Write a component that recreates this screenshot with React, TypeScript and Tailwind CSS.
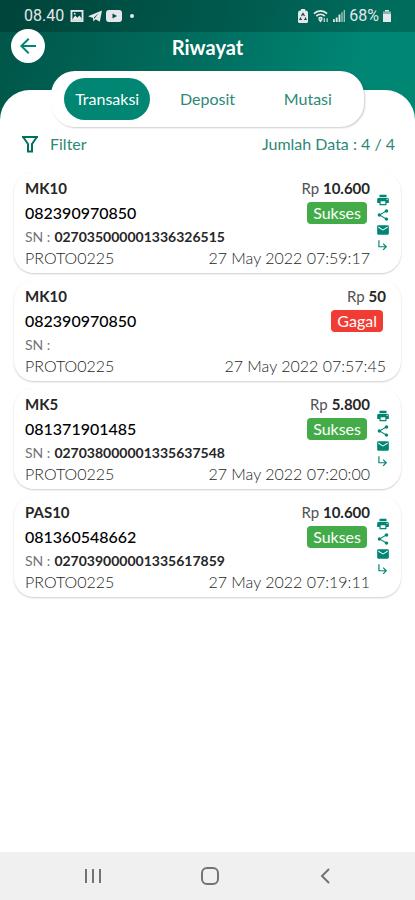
import { useState } from "react";
import { MdArrowBack, MdEmail, MdPrint, MdShare, MdSubdirectoryArrowRight } from "react-icons/md";

type Status = "Sukses" | "Gagal";

interface Transaction {
  id: number;
  product: string;
  target: string;
  sn: string;
  agent: string;
  price: string;
  status: Status;
  date: string;
}

const TABS = ["Transaksi", "Deposit", "Mutasi"];

const TRANSACTIONS: Transaction[] = [
  { id: 1, product: "MK10", target: "082390970850", sn: "027035000001336326515", agent: "PROTO0225", price: "10.600", status: "Sukses", date: "27 May 2022 07:59:17" },
  { id: 2, product: "MK10", target: "082390970850", sn: "", agent: "PROTO0225", price: "50", status: "Gagal", date: "27 May 2022 07:57:45" },
  { id: 3, product: "MK5", target: "081371901485", sn: "027038000001335637548", agent: "PROTO0225", price: "5.800", status: "Sukses", date: "27 May 2022 07:20:00" },
  { id: 4, product: "PAS10", target: "081360548662", sn: "027039000001335617859", agent: "PROTO0225", price: "10.600", status: "Sukses", date: "27 May 2022 07:19:11" },
];

const ACTIONS = [
  { label: "Cetak", Icon: MdPrint },
  { label: "Bagikan", Icon: MdShare },
  { label: "Email", Icon: MdEmail },
  { label: "Detail", Icon: MdSubdirectoryArrowRight },
];

function StatusBar() {
  return (
    <div className="flex h-8 items-center justify-between bg-black/20 px-6 font-[Roboto,sans-serif] text-base text-gray-200">
      <div className="flex items-center gap-1">
        <span className="mr-0.5">08.40</span>
        <svg viewBox="0 0 14 13" className="h-3 w-3.5" fill="none" stroke="currentColor" strokeWidth="2">
          <rect x="1" y="1" width="12" height="11" />
          <path d="M2 10l3-4 2.500 2.500L9.500 6 12 9v2H2z" fill="currentColor" stroke="none" />
          <circle cx="4.500" cy="4" r="1" fill="currentColor" stroke="none" />
        </svg>
        <svg viewBox="0 0 14 12" className="h-3 w-3.5" fill="currentColor">
          <path d="M14 .5L11.800 11.800 7.600 9.200 5.400 11.500 5 8 0 6.300zM10.600 3.200L6 7.600l.3 1.200z" fillRule="evenodd" />
        </svg>
        <svg viewBox="0 0 16 12" className="h-3 w-4">
          <path fill="currentColor" fillRule="evenodd" d="M3 0h10a3 3 0 0 1 3 3v6a3 3 0 0 1-3 3H3a3 3 0 0 1-3-3V3a3 3 0 0 1 3-3zm3.500 3.500v5L11 6z" />
        </svg>
        <span className="ml-1 size-1 rounded-full bg-current" />
      </div>
      <div className="flex items-center gap-1">
        <svg viewBox="0 0 12 14" className="h-3.5 w-3">
          <path fill="currentColor" d="M4 0h4v1.500h1A2.500 2.500 0 0 1 11 4v8.500A1.500 1.500 0 0 1 9.500 14h-7A1.500 1.500 0 0 1 1 12.500V4a2.500 2.500 0 0 1 2-2.500h1z" />
          <path fill="none" stroke="#0a5045" strokeWidth="1.200" d="M4.500 7L6 4.500 7.500 7M8.300 8.500L9 10.500H7M5 10.500H3L3.800 8.500" />
        </svg>
        <svg viewBox="0 0 17 14" className="h-3.5 w-4" fill="none" stroke="currentColor" strokeWidth="1.800">
          <path d="M1 4.500C5 .5 11 .5 15 4.500M3.500 7.200c2.600-2.600 6.400-2.600 9 0M6 9.700c1.200-1.200 2.800-1.200 4 0" />
          <path d="M8 13l-1.500-2h3zM12 9.500v4M15 13.500v-4" strokeWidth="1.200" />
        </svg>
        <svg viewBox="0 0 13 13" className="size-3" fill="currentColor">
          <path d="M0 10h2v3H0zM3 8h2v5H3zM6 5h2v8H6z" />
          <path d="M9 2.500h1.500V13H9zM11.500 0H13v13h-1.500z" opacity=".7" />
        </svg>
        <span>68%</span>
        <svg viewBox="0 0 8 12" className="h-3 w-2" fill="currentColor">
          <path d="M2 0h4v1.500H2z" />
          <path d="M0 1.500h8v3H0z" opacity=".6" />
          <path d="M0 4h8v8H0z" />
        </svg>
      </div>
    </div>
  );
}

function TransactionCard({ item }: { item: Transaction }) {
  const success = item.status === "Sukses";

  return (
    <li
      className={`flex h-[101px] gap-1.5 rounded-[20px] bg-white pt-1 pl-[11px] shadow-[0_1px_2px_rgba(0,0,0,0.2)] ${
        success ? "pr-[11px]" : "pr-[15px]"
      }`}
    >
      <div className="min-w-0 flex-1 text-base text-neutral-600">
        <div className="flex h-6 items-center justify-between">
          <p className="text-[15px] font-bold text-neutral-800">{item.product}</p>
          <p className="text-[15px]">
            Rp <span className="font-bold text-neutral-800">{item.price}</span>
          </p>
        </div>
        <div className="flex h-[26px] items-center justify-between">
          <p className="font-medium text-black">{item.target}</p>
          <span
            className={`mr-[3px] flex h-[22px] items-center rounded px-1.5 text-white ${
              success ? "bg-[#43ac48]" : "bg-[#f03c33]"
            }`}
          >
            {item.status}
          </span>
        </div>
        <p className="flex h-[22px] items-center gap-1 text-sm text-neutral-500">
          SN : <span className="font-bold text-neutral-800">{item.sn}</span>
        </p>
        <div className="flex h-5 items-center justify-between font-light text-neutral-800">
          <p>{item.agent}</p>
          <time>{item.date}</time>
        </div>
      </div>
      {success && (
        <div className="flex flex-col gap-px pt-[17px] text-[#008672]">
          {ACTIONS.map(({ label, Icon }) => (
            <button key={label} type="button" aria-label={label}>
              <Icon className="size-3.5" />
            </button>
          ))}
        </div>
      )}
    </li>
  );
}

export default function App() {
  const [activeTab, setActiveTab] = useState("Transaksi");

  return (
    <div className="flex min-h-screen flex-col bg-white font-[Lato,sans-serif]">
      <div className="bg-[linear-gradient(105deg,#005548,#006f60_50%,#008774_85%)]">
        <StatusBar />
        <header className="grid grid-cols-[1fr_auto_1fr] items-start px-[11px] pb-[27px]">
          <button
            type="button"
            aria-label="Kembali"
            className="-mt-[3px] flex size-[34px] items-center justify-center rounded-full bg-white text-[#008672]"
          >
            <MdArrowBack className="size-6" />
          </button>
          <h1 className="text-xl leading-[30px] font-bold text-white">Riwayat</h1>
        </header>
        <div className="h-9 rounded-t-[30px] bg-white" />
      </div>

      <main className="-mt-[55px] flex-1">
        <nav className="mx-[51px] flex h-14 items-center rounded-[24px] bg-white px-[6px] shadow-[1px_1px_2px_rgba(0,0,0,0.2)]">
          {TABS.map((tab) => (
            <div key={tab} className="flex-1 px-[7px]">
              <button
                type="button"
                onClick={() => setActiveTab(tab)}
                className={`h-[42px] w-full rounded-full text-base ${
                  activeTab === tab ? "bg-[#008672] text-white" : "text-[#2d8878]"
                }`}
              >
                {tab}
              </button>
            </div>
          ))}
        </nav>

        <div className="flex h-[34px] items-center justify-between pr-5 pl-[22px] text-base text-[#2d8878]">
          <button type="button" className="flex items-center gap-3">
            <svg viewBox="0 0 16 17" className="h-[17px] w-4" fill="none" stroke="#00705f" strokeWidth="2">
              <path d="M0 1h16" />
              <path d="M1.500 1.500L6 8v7.500h4V8l4.500-6.500" />
            </svg>
            Filter
          </button>
          <p>Jumlah Data : 4 / 4</p>
        </div>

        <ul className="mt-[11px] flex flex-col gap-[7px] px-[14px] pb-4">
          {TRANSACTIONS.map((item) => (
            <TransactionCard key={item.id} item={item} />
          ))}
        </ul>
      </main>

      <footer className="flex h-12 items-center justify-around bg-[#f0f0f0] px-[35px] text-neutral-500">
        <button type="button" aria-label="Aplikasi terbaru">
          <svg viewBox="0 0 16 16" className="size-4" fill="none" stroke="currentColor" strokeWidth="2">
            <path d="M1 1v14M8 1v14M15 1v14" />
          </svg>
        </button>
        <button type="button" aria-label="Beranda">
          <svg viewBox="0 0 18 18" className="size-[18px]" fill="none" stroke="currentColor" strokeWidth="2">
            <rect x="1" y="1" width="16" height="16" rx="5" />
          </svg>
        </button>
        <button type="button" aria-label="Kembali ke layar sebelumnya">
          <svg viewBox="0 0 10 16" className="h-4 w-2.5" fill="none" stroke="currentColor" strokeWidth="2">
            <path d="M9 1L2 8l7 7" />
          </svg>
        </button>
      </footer>
    </div>
  );
}
